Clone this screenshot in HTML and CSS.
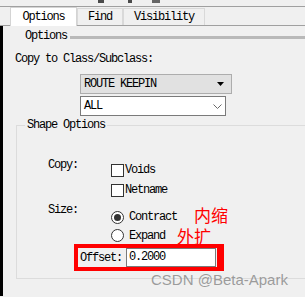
FILE: index.html
```html
<!DOCTYPE html>
<html lang="en">
<head>
  <meta charset="UTF-8" />
  <title>Options</title>
  <link rel="stylesheet" href="styles.css">
</head>
<body>
  <!-- cut off toolbar at the top -->
  <div class="topbar">
    <span class="mark mark-a"></span>
    <span class="mark mark-b"></span>
    <span class="mark mark-c"></span>
  </div>

  <div class="tabs">
    <div class="tab active">Options</div>
    <div class="tab tab-find">Find</div>
    <div class="tab tab-vis">Visibility</div>
  </div>

  <div class="panel">
    <div class="edge"></div>
    <div class="content">
      <div class="group-head">
        <span>Options</span>
        <span class="rule"></span>
      </div>

      <div class="copy-title">Copy to Class/Subclass:</div>

      <div class="combo combo-class">
        <span>ROUTE KEEPIN</span>
        <svg class="arrow" width="7" height="4" viewBox="0 0 7 4"><polygon points="0,0 7,0 3.5,4" fill="#000"/></svg>
      </div>
      <div class="combo combo-sub">
        <span>ALL</span>
        <svg class="chevron" width="9" height="5" viewBox="0 0 9 5"><polyline points="0.5,0.5 4.5,4.5 8.5,0.5" fill="none" stroke="#6a6a6a" stroke-width="1"/></svg>
      </div>

      <fieldset class="shape">
        <legend>Shape Options</legend>
        <div class="shape-body">
          <div class="opt-row copy-row">
            <div class="opt-label">Copy:</div>
            <div class="opt-controls">
              <div class="check-row"><span class="box"></span>Voids</div>
              <div class="check-row"><span class="box"></span>Netname</div>
            </div>
          </div>

          <div class="opt-row size-row">
            <div class="opt-label">Size:</div>
            <div class="opt-controls">
              <div class="radio-row"><span class="radio on"></span>Contract</div>
              <div class="radio-row short"><span class="radio"></span>Expand</div>
            </div>
          </div>

          <div class="offset">
            <span class="offset-label">Offset:</span>
            <div class="offset-input">0.2000</div>
          </div>
        </div>
      </fieldset>
    </div>
  </div>

  <div class="note note-in">内缩</div>
  <div class="note note-out">外扩</div>
  <div class="watermark">CSDN @Beta-Apark</div>
</body>
</html>
```

FILE: styles.css
```css
* {
  box-sizing: border-box;
}

body {
  margin: 0;
  width: 305px;
  height: 297px;
  overflow: hidden;
  position: relative;
  background-color: #f0f0f0;
  color: #000;
  font-family: "Liberation Mono", "DejaVu Sans Mono", monospace;
  font-size: 12px;
  letter-spacing: -1.2px;
}

/* Top strip */
.topbar {
  display: flex;
  height: 7px;
  border-bottom: 1px solid #a0a0a0;
}

.mark {
  height: 3px;
  background-color: #4a4a4a;
}

.mark-a {
  width: 6px;
  margin-left: 98px;
}

.mark-b {
  width: 4px;
  margin-left: 24px;
}

.mark-c {
  width: 8px;
  margin-left: 20px;
  background-color: #666;
}

/* Tabs */
.tabs {
  display: flex;
  align-items: flex-end;
  height: 19px;
  padding-left: 10px;
  border-bottom: 1px solid #a0a0a0;
}

.tab {
  height: 17px;
  line-height: 16px;
  text-align: center;
  border: 1px solid #d9d9d9;
  border-bottom: none;
  background-color: #f0f0f0;
}

.tab.active {
  width: 67px;
  height: 19px;
  line-height: 18px;
  margin-bottom: -1px;
  background-color: #fff;
  border-color: #d4d4d4;
}

.tab-find {
  width: 46px;
}

.tab-vis {
  width: 82px;
}

/* Panel */
.panel {
  display: flex;
  height: 270px;
}

.edge {
  width: 3px;
  background-color: #000;
}

.content {
  flex: 1;
  min-width: 0;
}

.group-head {
  display: flex;
  height: 15px;
  line-height: 15px;
  margin-top: 3px;
  padding-left: 22px;
}

.rule {
  flex: 1;
  height: 3px;
  margin: 7px 0 0 3px;
  background-color: #b9b9b9;
}

.copy-title {
  margin-top: 8px;
  padding-left: 12px;
  line-height: 14px;
}

/* Combo boxes */
.combo {
  display: flex;
  align-items: center;
  height: 20px;
  margin-left: 77px;
  padding-left: 3px;
}

.combo-class {
  width: 152px;
  margin-top: 8px;
  background-color: #e1e1e1;
  border: 1px solid #adadad;
}

.combo-sub {
  width: 146px;
  margin-top: 2px;
  background-color: #fff;
  border: 1px solid #7a7a7a;
}

.arrow {
  margin-left: auto;
  margin-right: 7px;
}

.chevron {
  margin-left: auto;
  margin-right: 3px;
}

/* Shape options group, its right side runs past the window */
.shape {
  margin: 2px 0 0 13px;
  padding: 0 0 7px 0;
  border: 1px solid #dcdcdc;
  border-right: none;
  min-width: 0;
}

.shape legend {
  margin-left: 8px;
  padding: 0 2px;
  line-height: 14px;
}

.shape-body {
  padding-left: 31px;
}

.opt-row {
  display: grid;
  grid-template-columns: 63px 1fr;
}

.opt-label {
  line-height: 14px;
}

.copy-row {
  margin-top: 26px;
}

.copy-row .opt-controls {
  margin-top: 2px;
}

.size-row {
  margin-top: 3px;
}

.size-row .opt-controls {
  margin-top: 4px;
}

.check-row,
.radio-row {
  display: flex;
  align-items: center;
  height: 20px;
}

.radio-row.short {
  height: 17px;
}

.box {
  width: 13px;
  height: 13px;
  margin-right: 1px;
  border: 1px solid #333;
  background-color: #fff;
}

.radio {
  display: flex;
  align-items: center;
  justify-content: center;
  width: 13px;
  height: 13px;
  margin-right: 5px;
  border: 1px solid #333;
  border-radius: 50%;
  background-color: #fff;
}

.radio.on::after {
  content: "";
  width: 7px;
  height: 7px;
  border-radius: 50%;
  background-color: #333;
}

/* Offset, marked with a red box */
.offset {
  display: flex;
  align-items: center;
  width: 150px;
  height: 27px;
  margin-left: 26px;
  border: 4px solid #ff0000;
  border-right-width: 7px;
  background-color: #f0f0f0;
}

.offset-label {
  padding-left: 2px;
}

.offset-input {
  width: 90px;
  height: 19px;
  line-height: 17px;
  margin-left: auto;
  margin-right: 1px;
  padding-left: 2px;
  border: 1px solid #7a7a7a;
  background-color: #fff;
}

/* Annotations laid over the dialog */
.note {
  position: absolute;
  color: #ff0000;
  font-family: "Noto Sans CJK SC", sans-serif;
  font-size: 17px;
  line-height: 17px;
  letter-spacing: 0;
}

.note-in {
  left: 194px;
  top: 206px;
}

.note-out {
  left: 177px;
  top: 227px;
}

.watermark {
  position: absolute;
  left: 151px;
  top: 271px;
  color: rgba(140, 140, 140, 0.85);
  font-family: "Liberation Sans", Arial, sans-serif;
  font-size: 15px;
  letter-spacing: 0;
}
```
